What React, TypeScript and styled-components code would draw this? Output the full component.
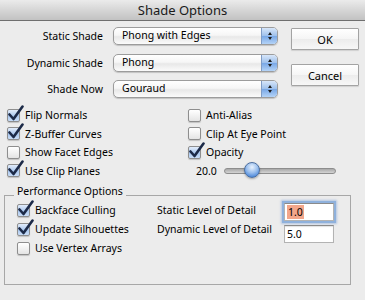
import React from "react"
import styled, { createGlobalStyle } from "styled-components"

const GlobalStyle = createGlobalStyle`
  html, body {
    margin: 0;
    padding: 0;
    background: #ececec;
  }
  body {
    font-family: "Noto Sans", "DejaVu Sans", sans-serif;
    font-size: 10.5px;
    color: #000;
  }
`

type CheckProps = {
  label: string,
  checked?: boolean,
}

function Check({ label, checked }: CheckProps): JSX.Element {
  return (
    <CheckRow>
      <Box $checked={checked}>
        {checked && (
          <Mark viewBox="0 0 18 18" width={18} height={18}>
            <path
              d="M2.5 9.5 L6.5 14 L15.5 1.5"
              fill="none"
              stroke="#1c2a48"
              strokeWidth={2.6}
              strokeLinecap="round"
              strokeLinejoin="round"
            />
          </Mark>
        )}
      </Box>
      <span>{label}</span>
    </CheckRow>
  )
}

function PopupButton({ value }: { value: string }): JSX.Element {
  return (
    <Popup>
      <PopupText>{value}</PopupText>
      <Stepper>
        <ArrowUp />
        <ArrowDown />
      </Stepper>
    </Popup>
  )
}

export default function App(): JSX.Element {
  const opacity = 20
  const trackWidth = 110
  const thumbSize = 16
  const thumbLeft = (opacity / 100) * (trackWidth - thumbSize)

  return (
    <Window>
      <GlobalStyle />
      <TitleBar>Shade Options</TitleBar>
      <Top>
        <ShadeGrid>
          <FieldLabel>Static Shade</FieldLabel>
          <PopupButton value="Phong with Edges" />
          <FieldLabel>Dynamic Shade</FieldLabel>
          <PopupButton value="Phong" />
          <FieldLabel>Shade Now</FieldLabel>
          <PopupButton value="Gouraud" />
        </ShadeGrid>
        <Buttons>
          <PushButton>OK</PushButton>
          <PushButton>Cancel</PushButton>
        </Buttons>
      </Top>
      <Checks>
        <Check label="Flip Normals" checked />
        <Check label="Anti-Alias" />
        <Check label="Z-Buffer Curves" checked />
        <Check label="Clip At Eye Point" />
        <Check label="Show Facet Edges" />
        <Check label="Opacity" checked />
        <Check label="Use Clip Planes" checked />
        <SliderRow>
          <span>20.0</span>
          <Track style={{ width: trackWidth }}>
            <Thumb style={{ left: thumbLeft }} />
          </Track>
        </SliderRow>
      </Checks>
      <Group>
        <GroupTitle>Performance Options</GroupTitle>
        <GroupBody>
          <CheckCol>
            <Check label="Backface Culling" checked />
            <Check label="Update Silhouettes" checked />
            <Check label="Use Vertex Arrays" />
          </CheckCol>
          <LabelCol>
            <LevelLabel>Static Level of Detail</LevelLabel>
            <LevelLabel>Dynamic Level of Detail</LevelLabel>
          </LabelCol>
          <FieldCol>
            <TextField $focused>
              <Selected>1.0</Selected>
            </TextField>
            <TextField>5.0</TextField>
          </FieldCol>
        </GroupBody>
      </Group>
    </Window>
  )
}

const Window = styled.div`
  width: 365px;
  height: 300px;
  background: #ececec;
  display: flex;
  flex-direction: column;
  overflow: hidden;
`

const TitleBar = styled.div`
  height: 20px;
  flex-shrink: 0;
  border-bottom: 1px solid #6f6f6f;
  background: linear-gradient(#ebebeb, #d6d6d6 50%, #c2c2c2);
  display: flex;
  align-items: center;
  justify-content: center;
  font-size: 13px;
  color: #1a1a1a;
`

const Top = styled.div`
  display: flex;
  padding-top: 6px;
`

const ShadeGrid = styled.div`
  display: grid;
  grid-template-columns: 103px 165px;
  grid-auto-rows: 18px;
  column-gap: 10px;
  row-gap: 8.5px;
`

const FieldLabel = styled.div`
  text-align: right;
  line-height: 18px;
`

const Popup = styled.div`
  height: 18px;
  box-sizing: border-box;
  display: flex;
  border: 1px solid #9c9c9c;
  border-radius: 5px;
  overflow: hidden;
  background: linear-gradient(#ffffff, #f6f6f6 45%, #e8e8e8 55%, #fbfbfb);
  box-shadow: 0 1px 1px rgba(0, 0, 0, 0.18);
`

const PopupText = styled.div`
  flex: 1;
  padding-left: 8px;
  line-height: 15px;
`

const Stepper = styled.div`
  width: 15px;
  border-left: 1px solid #7f9cc6;
  background: linear-gradient(#d7e6f9, #9fc1ec 48%, #79a8e6 52%, #b4d3f7);
  display: flex;
  flex-direction: column;
  align-items: center;
  justify-content: center;
  gap: 2px;
`

const ArrowUp = styled.div`
  width: 0;
  height: 0;
  border-left: 2.5px solid transparent;
  border-right: 2.5px solid transparent;
  border-bottom: 3px solid #1d1d1d;
`

const ArrowDown = styled.div`
  width: 0;
  height: 0;
  border-left: 2.5px solid transparent;
  border-right: 2.5px solid transparent;
  border-top: 3px solid #1d1d1d;
`

const Buttons = styled.div`
  display: flex;
  flex-direction: column;
  gap: 14px;
  margin-left: 13px;
  padding-top: 1px;
`

const PushButton = styled.div`
  width: 68px;
  height: 22px;
  box-sizing: border-box;
  border: 1px solid #a3a3a3;
  border-radius: 1px;
  background: linear-gradient(#ffffff, #f5f5f5 50%, #ececec 52%, #f7f7f7);
  box-shadow: 0 1px 1px rgba(0, 0, 0, 0.12);
  display: flex;
  align-items: center;
  justify-content: center;
  font-size: 11px;
`

const Checks = styled.div`
  display: grid;
  grid-template-columns: 181px 1fr;
  grid-auto-rows: 18.5px;
  padding-left: 7px;
  margin-top: 8px;
`

const CheckRow = styled.div`
  display: flex;
  align-items: center;
  gap: 5px;
  height: 18.5px;
  white-space: nowrap;
`

const Box = styled.div<{ $checked?: boolean }>`
  position: relative;
  width: 13px;
  height: 13px;
  flex-shrink: 0;
  box-sizing: border-box;
  border: 1px solid #8e8e8e;
  border-radius: 2px;
  background: ${(p) =>
    p.$checked
      ? "linear-gradient(#e2ecfa, #aac8ef 55%, #c9ddf7)"
      : "linear-gradient(#ffffff, #f2f2f2 50%, #e4e4e4)"};
  box-shadow: 0 1px 1px rgba(0, 0, 0, 0.18);
`

const Mark = styled.svg`
  position: absolute;
  left: -1px;
  top: -5px;
`

const SliderRow = styled.div`
  display: flex;
  align-items: center;
  gap: 7px;
  padding-left: 8px;
`

const Track = styled.div`
  position: relative;
  height: 4px;
  border: 1px solid #8d8d8d;
  border-radius: 3px;
  background: linear-gradient(#a8a8a8, #d4d4d4);
`

const Thumb = styled.div`
  position: absolute;
  top: -7px;
  width: 16px;
  height: 16px;
  box-sizing: border-box;
  border-radius: 50%;
  border: 1px solid #4d6f9f;
  background: radial-gradient(circle at 50% 30%, #e9f2fd 0%, #9cc0ee 45%, #4f8ada 80%, #6fa2e6);
  box-shadow: 0 1px 2px rgba(0, 0, 0, 0.3);
`

const Group = styled.div`
  margin: 15px 0 0 4px;
  width: 347px;
  height: 90px;
  box-sizing: border-box;
  border: 1px solid #a7a7a7;
`

const GroupTitle = styled.div`
  width: fit-content;
  margin: -11px 0 0 9px;
  padding: 0 3px;
  line-height: 12px;
  background: #ececec;
`

const GroupBody = styled.div`
  display: flex;
  padding: 3.5px 0 0 12px;
`

const CheckCol = styled.div`
  width: 140px;
  display: flex;
  flex-direction: column;

  & > div {
    height: 19px;
  }
`

const LabelCol = styled.div`
  width: 127px;
  display: flex;
  flex-direction: column;
`

const LevelLabel = styled.div`
  line-height: 19px;
`

const FieldCol = styled.div`
  display: flex;
  flex-direction: column;
  gap: 4px;
  padding-top: 2px;
`

const TextField = styled.div<{ $focused?: boolean }>`
  width: 50px;
  height: 18px;
  box-sizing: border-box;
  border: 1px solid #b3b3b3;
  border-top-color: #8a8a8a;
  background: #fff;
  box-shadow: ${(p) =>
    p.$focused
      ? "0 0 0 2px #8fb1dc, 0 0 2px 3px rgba(120, 160, 215, 0.5)"
      : "inset 0 1px 1px rgba(0, 0, 0, 0.12)"};
  padding-left: 2px;
  line-height: 16px;
`

const Selected = styled.span`
  background: #f3a68a;
  padding: 0 1px;
`
